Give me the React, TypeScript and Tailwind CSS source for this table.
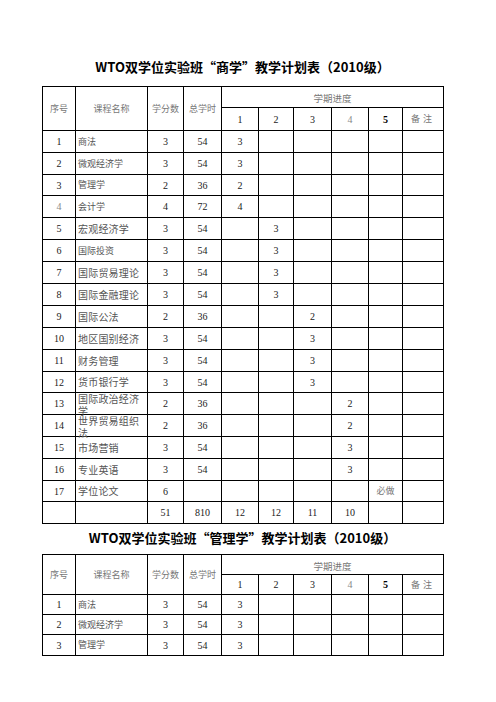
import React from "react";

type Row = {
  no: string;
  name: string;
  credit: string;
  hours: string;
  terms: string[]; // 6 cells: 1..5 + 备注
  small?: boolean;
  h: number;
  grayNo?: boolean;
};

const cjk = "font-['Noto_Sans_CJK_SC',sans-serif]";
const num = "font-['Liberation_Serif','Noto_Sans_CJK_SC',serif]";

const widths = [33, 72, 36, 38, 37, 35, 38, 37, 34, 41];

function term(n: number, v: string) {
  const t = ["", "", "", "", "", ""];
  t[n] = v;
  return t;
}

const plan1: Row[] = [
  { no: "1", name: "商法", credit: "3", hours: "54", terms: term(0, "3"), small: true, h: 22 },
  { no: "2", name: "微观经济学", credit: "3", hours: "54", terms: term(0, "3"), small: true, h: 22 },
  { no: "3", name: "管理学", credit: "2", hours: "36", terms: term(0, "2"), small: true, h: 21 },
  { no: "4", name: "会计学", credit: "4", hours: "72", terms: term(0, "4"), small: true, h: 22, grayNo: true },
  { no: "5", name: "宏观经济学", credit: "3", hours: "54", terms: term(1, "3"), h: 22 },
  { no: "6", name: "国际投资", credit: "3", hours: "54", terms: term(1, "3"), small: true, h: 22 },
  { no: "7", name: "国际贸易理论", credit: "3", hours: "54", terms: term(1, "3"), h: 22 },
  { no: "8", name: "国际金融理论", credit: "3", hours: "54", terms: term(1, "3"), h: 22 },
  { no: "9", name: "国际公法", credit: "2", hours: "36", terms: term(2, "2"), h: 22 },
  { no: "10", name: "地区国别经济", credit: "3", hours: "54", terms: term(2, "3"), h: 22 },
  { no: "11", name: "财务管理", credit: "3", hours: "54", terms: term(2, "3"), h: 22 },
  { no: "12", name: "货币银行学", credit: "3", hours: "54", terms: term(2, "3"), h: 21 },
  { no: "13", name: "国际政治经济学", credit: "2", hours: "36", terms: term(3, "2"), h: 22 },
  { no: "14", name: "世界贸易组织法", credit: "2", hours: "36", terms: term(3, "2"), h: 22 },
  { no: "15", name: "市场营销", credit: "3", hours: "54", terms: term(3, "3"), h: 22 },
  { no: "16", name: "专业英语", credit: "3", hours: "54", terms: term(3, "3"), h: 22 },
  { no: "17", name: "学位论文", credit: "6", hours: "", terms: term(4, "必做"), h: 21 },
  { no: "", name: "", credit: "51", hours: "810", terms: ["12", "12", "11", "10", "", ""], h: 22 },
];

const plan2: Row[] = [
  { no: "1", name: "商法", credit: "3", hours: "54", terms: term(0, "3"), small: true, h: 20 },
  { no: "2", name: "微观经济学", credit: "3", hours: "54", terms: term(0, "3"), small: true, h: 20 },
  { no: "3", name: "管理学", credit: "3", hours: "54", terms: term(0, "3"), small: true, h: 21 },
];

const cell = "border border-black p-0 align-middle";

function PlanTable({ rows, h1, h2 }: { rows: Row[]; h1: number; h2: number }) {
  return (
    <table className="border-collapse table-fixed w-[401px]">
      <colgroup>
        {widths.map((w, i) => (
          <col key={i} style={{ width: w }} />
        ))}
      </colgroup>
      <thead>
        <tr style={{ height: h1 }}>
          {["序号", "课程名称", "学分数", "总学时"].map((t) => (
            <th key={t} rowSpan={2} className={`${cell} ${cjk} text-[9px] font-normal text-[#777] text-center`}>
              {t}
            </th>
          ))}
          <th colSpan={6} className={`${cell} ${cjk} text-[9.5px] font-normal text-[#777] text-center pt-[3px]`}>
            学期进度
          </th>
        </tr>
        <tr style={{ height: h2 }}>
          <th className={`${cell} ${num} text-[10px] font-normal text-[#222]`}>1</th>
          <th className={`${cell} ${num} text-[10px] font-normal text-[#222]`}>2</th>
          <th className={`${cell} ${num} text-[10px] font-normal text-[#222]`}>3</th>
          <th className={`${cell} ${num} text-[10px] font-normal text-[#888]`}>4</th>
          <th className={`${cell} ${num} text-[10px] font-bold text-black`}>5</th>
          <th className={`${cell} ${cjk} text-[9px] font-normal text-[#777] tracking-[3px]`}>备注</th>
        </tr>
      </thead>
      <tbody>
        {rows.map((r, i) => (
          <tr key={i} style={{ height: r.h }}>
            <td className={`${cell} ${num} text-[10px] text-center ${r.grayNo ? "text-[#888]" : "text-[#222]"}`}>{r.no}</td>
            <td
              className={`${cell} ${cjk} text-[#555] pl-[2px] text-left ${
                r.small ? "text-[9px]" : "text-[10px] tracking-[0.2px]"
              } leading-[12px]`}
            >
              <div className="max-h-[21px] overflow-visible">{r.name}</div>
            </td>
            <td className={`${cell} ${num} text-[10px] text-center text-[#222]`}>{r.credit}</td>
            <td className={`${cell} ${num} text-[10px] text-center text-[#222]`}>{r.hours}</td>
            {r.terms.map((t, j) => (
              <td
                key={j}
                className={`${cell} text-center ${
                  t === "必做" ? `${cjk} text-[9px] text-[#777]` : `${num} text-[10px] text-[#222]`
                }`}
              >
                {t}
              </td>
            ))}
          </tr>
        ))}
      </tbody>
    </table>
  );
}

export default function App() {
  return (
    <div className="w-[496px] h-[702px] bg-white overflow-hidden pl-[42px] pt-[58px]">
      <div className={`w-[401px] text-center ${cjk} font-bold text-[13px] leading-[18px] text-black`}>
        WTO双学位实验班“商学”教学计划表（2010级）
      </div>
      <div className="mt-[10px]">
        <PlanTable rows={plan1} h1={21} h2={23} />
      </div>
      <div className={`mt-[5px] w-[401px] text-center ${cjk} font-bold text-[13px] leading-[18px] text-black`}>
        WTO双学位实验班“管理学”教学计划表（2010级）
      </div>
      <div className="mt-[7px]">
        <PlanTable rows={plan2} h1={20} h2={20} />
      </div>
    </div>
  );
}
